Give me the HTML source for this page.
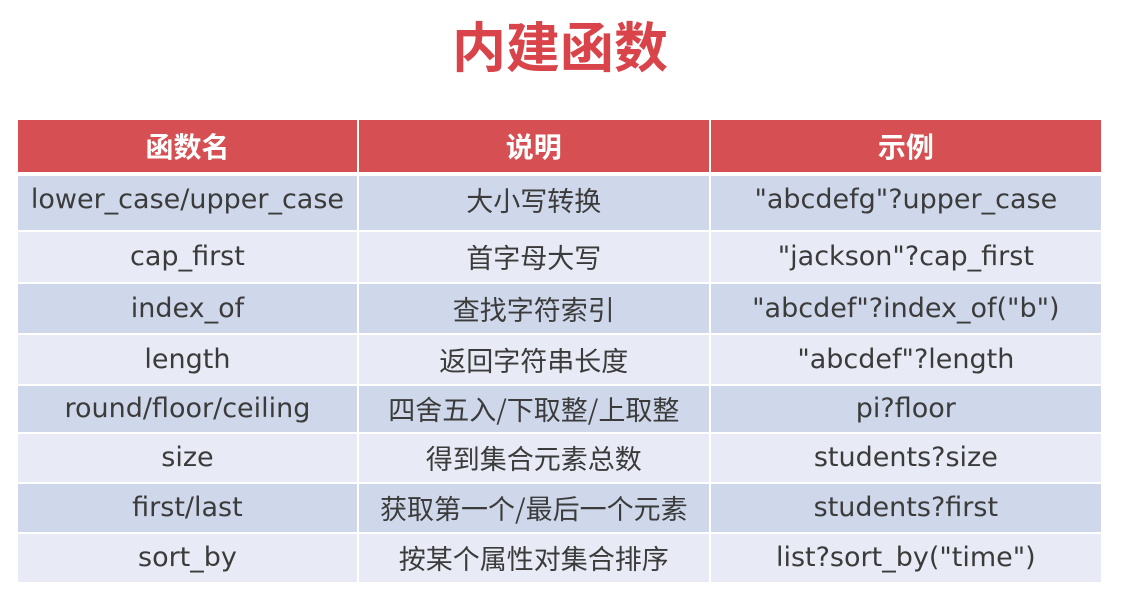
<!DOCTYPE html>
<html><head><meta charset="utf-8"><style>
body{margin:0;width:1124px;height:600px;background:#fff;overflow:hidden;font-family:"DejaVu Sans","Noto Sans CJK SC",sans-serif;}
h1{position:absolute;left:0;width:1120px;top:12px;margin:0;text-align:center;font:bold 54px "Noto Sans CJK SC",sans-serif;color:#d9434a;line-height:64px;}
table{position:absolute;left:16px;top:120px;width:1087px;border-collapse:collapse;}
td,th{border:2px solid #fff;text-align:center;padding:0;font-size:27px;color:#3b3b3b;font-weight:normal;line-height:30px}
th{background:#d64f52;color:#fff;font-weight:bold;font-family:"Noto Sans CJK SC",sans-serif;height:52px;border-top:none;font-size:28px;border-bottom:4px solid #fff}
tr.o td{background:#cfd8ea}
tr.e td{background:#e8ebf5}
td.c{font-family:"Noto Sans CJK SC",sans-serif;font-size:27px}
tr.o:first-of-type td{padding-bottom:6px}
</style></head><body>
<h1>内建函数</h1>
<table>
<colgroup><col style="width:341px"><col style="width:353px"><col style="width:393px"></colgroup>
<tr><th>函数名</th><th>说明</th><th>示例</th></tr>
<tr class="o" style="height:57px"><td style="padding-bottom:6px">lower_case/upper_case</td><td class="c" style="padding-bottom:6px">大小写转换</td><td style="padding-bottom:6px">"abcdefg"?upper_case</td></tr>
<tr class="e" style="height:52px"><td>cap_first</td><td class="c">首字母大写</td><td>"jackson"?cap_first</td></tr>
<tr class="o" style="height:51px"><td>index_of</td><td class="c">查找字符索引</td><td>"abcdef"?index_of("b")</td></tr>
<tr class="e" style="height:51px"><td>length</td><td class="c">返回字符串长度</td><td>"abcdef"?length</td></tr>
<tr class="o" style="height:48px"><td>round/floor/ceiling</td><td class="c">四舍五入/下取整/上取整</td><td>pi?floor</td></tr>
<tr class="e" style="height:50px"><td>size</td><td class="c">得到集合元素总数</td><td>students?size</td></tr>
<tr class="o" style="height:50px"><td>first/last</td><td class="c">获取第一个/最后一个元素</td><td>students?first</td></tr>
<tr class="e" style="height:50px"><td>sort_by</td><td class="c">按某个属性对集合排序</td><td>list?sort_by("time")</td></tr>
</table>
</body></html>
